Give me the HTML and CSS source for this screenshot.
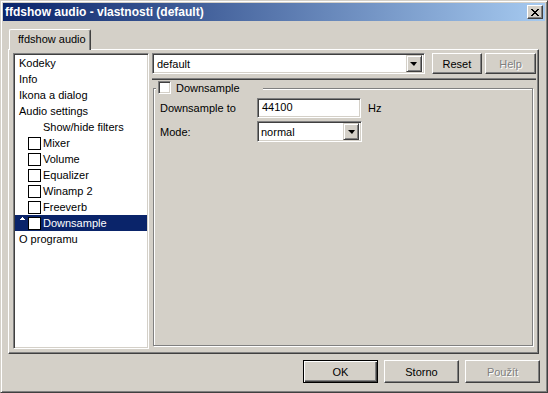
FILE: index.html
```html
<!doctype html>
<html lang="cs">
  <head>
    <meta charset="UTF-8" />
    <title>ffdshow audio - vlastnosti (default)</title>
    <link rel="stylesheet" href="styles.css">
  </head>
  <body>
    <div class="window">
      <div class="titlebar">
        <span class="title">ffdshow audio - vlastnosti (default)</span>
        <span class="close-btn">
          <svg width="8" height="7" viewBox="0 0 8 7" shape-rendering="crispEdges">
            <path d="M0 0h2v1h-2zM6 0h2v1h-2zM1 1h2v1h-2zM5 1h2v1h-2zM2 2h4v1h-4zM3 3h2v1h-2zM2 4h4v1h-4zM1 5h2v1h-2zM5 5h2v1h-2zM0 6h2v1h-2zM6 6h2v1h-2z" fill="#000"/>
          </svg>
        </span>
      </div>

      <div class="tabs">
        <div class="tab">ffdshow audio</div>
      </div>

      <div class="tab-panel">
        <ul class="tree">
          <li>Kodeky</li>
          <li>Info</li>
          <li>Ikona a dialog</li>
          <li>Audio settings</li>
          <li class="sub plain">Show/hide filters</li>
          <li class="sub"><span class="chk"></span>Mixer</li>
          <li class="sub"><span class="chk"></span>Volume</li>
          <li class="sub"><span class="chk"></span>Equalizer</li>
          <li class="sub"><span class="chk"></span>Winamp 2</li>
          <li class="sub"><span class="chk"></span>Freeverb</li>
          <li class="sub selected">
            <svg class="marker" width="5" height="3" viewBox="0 0 5 3" shape-rendering="crispEdges"><path d="M2 0h1v1h1v1h1v1h-5v-1h1v-1h1z" fill="#fff"/></svg>
            <span class="chk"></span>Downsample
          </li>
          <li>O programu</li>
        </ul>

        <div class="settings">
          <div class="toolbar">
            <div class="combo preset">
              <span class="combo-value">default</span>
              <span class="drop-btn"><span class="drop-arrow"></span></span>
            </div>
            <button class="btn small">Reset</button>
            <button class="btn small" disabled>Help</button>
          </div>

          <div class="separator"></div>

          <div class="group">
            <div class="group-title"><span class="check3d"></span>Downsample</div>
            <div class="field-row">
              <label>Downsample to</label>
              <div class="edit">44100</div>
              <span class="unit">Hz</span>
            </div>
            <div class="field-row">
              <label>Mode:</label>
              <div class="combo mode">
                <span class="combo-value">normal</span>
                <span class="drop-btn"><span class="drop-arrow"></span></span>
              </div>
            </div>
          </div>
        </div>
      </div>

      <div class="dialog-buttons">
        <button class="btn wide default">OK</button>
        <button class="btn wide">Storno</button>
        <button class="btn wide" disabled>Použít</button>
      </div>
    </div>
  </body>
</html>
```

FILE: styles.css
```css
body {
  margin: 0;
  font-family: 'Liberation Sans', Arial, sans-serif;
  font-size: 11px;
  color: #000;
  background-color: #d4d0c8;
}

.window {
  width: 548px;
  height: 393px;
  box-sizing: border-box;
  padding: 2px;
  background-color: #d4d0c8;
  border: 1px solid;
  border-color: #d4d0c8 #404040 #404040 #d4d0c8;
  box-shadow: inset 1px 1px #fff, inset -1px -1px #808080;
}

.titlebar {
  height: 18px;
  display: flex;
  align-items: center;
  justify-content: space-between;
  padding: 0 2px 0 2px;
  background: linear-gradient(to right, #0a246a, #a6caf0);
}

.title {
  color: #fff;
  font-weight: bold;
  font-size: 12px;
  line-height: 18px;
}

.close-btn {
  width: 16px;
  height: 14px;
  box-sizing: border-box;
  display: flex;
  align-items: center;
  justify-content: center;
  background-color: #d4d0c8;
  border: 1px solid;
  border-color: #fff #404040 #404040 #fff;
  box-shadow: inset -1px -1px #808080;
}

.close-btn svg {
  display: block;
}

.tabs {
  display: flex;
  margin: 8px 0 0 6px;
  position: relative;
  z-index: 1;
}

.tab {
  width: 82px;
  height: 21px;
  box-sizing: border-box;
  margin-bottom: -1px;
  padding-left: 8px;
  line-height: 19px;
  background-color: #d4d0c8;
  border: 1px solid;
  border-color: #fff #404040 #d4d0c8 #fff;
  border-bottom: none;
  border-radius: 2px 2px 0 0;
  box-shadow: inset -1px 0 #808080;
}

.tab-panel {
  width: 531px;
  height: 305px;
  box-sizing: border-box;
  margin-left: 5px;
  display: flex;
  gap: 3px;
  padding: 3px 1px 0 4px;
  border: 1px solid;
  border-color: #fff #404040 #404040 #fff;
  box-shadow: inset -1px -1px #808080;
}

/* tree list on the left */
.tree {
  width: 136px;
  height: 296px;
  box-sizing: border-box;
  margin: 0;
  padding: 0;
  list-style: none;
  background-color: #fff;
  border: 1px solid;
  border-color: #808080 #fff #fff #808080;
  box-shadow: inset 1px 1px #404040, inset -1px -1px #d4d0c8;
  padding: 1px;
}

.tree li {
  height: 16px;
  line-height: 16px;
  padding-left: 4px;
  display: flex;
  align-items: center;
  position: relative;
  white-space: nowrap;
}

.tree li.sub {
  padding-left: 13px;
}

.tree li.plain {
  padding-left: 28px;
}

.tree li.selected {
  background-color: #0a246a;
  color: #fff;
}

.marker {
  position: absolute;
  left: 5px;
  top: 2px;
}

.chk {
  width: 13px;
  height: 13px;
  box-sizing: border-box;
  margin-right: 2px;
  border: 1px solid #000;
  background-color: #fff;
}

/* right side */
.settings {
  width: 384px;
  display: flex;
  flex-direction: column;
}

.toolbar {
  display: flex;
  height: 21px;
}

.combo {
  height: 21px;
  box-sizing: border-box;
  display: flex;
  align-items: center;
  justify-content: space-between;
  background-color: #fff;
  border: 1px solid;
  border-color: #808080 #fff #fff #808080;
  box-shadow: inset 1px 1px #404040, inset -1px -1px #d4d0c8;
  padding: 2px 2px 2px 4px;
}

.preset {
  width: 274px;
  margin-right: 4px;
}

.mode {
  width: 105px;
  padding-left: 3px;
}

.drop-btn {
  width: 16px;
  height: 17px;
  box-sizing: border-box;
  display: flex;
  align-items: center;
  justify-content: center;
  background-color: #d4d0c8;
  border: 1px solid;
  border-color: #d4d0c8 #404040 #404040 #d4d0c8;
  box-shadow: inset 1px 1px #fff, inset -1px -1px #808080;
}

.drop-arrow {
  width: 0;
  height: 0;
  border-left: 4px solid transparent;
  border-right: 3px solid transparent;
  border-top: 4px solid #000;
  margin-top: 1px;
}

.btn {
  font-family: 'Liberation Sans', Arial, sans-serif;
  font-size: 11px;
  color: #000;
  background-color: #d4d0c8;
  box-sizing: border-box;
  padding: 0;
  border: 1px solid;
  border-color: #fff #404040 #404040 #fff;
  box-shadow: inset -1px -1px #808080;
}

.btn:disabled {
  color: #808080;
  text-shadow: 1px 1px #fff;
}

.btn.small {
  width: 51px;
  height: 21px;
  margin-left: 3px;
}

.separator {
  height: 2px;
  margin-top: 4px;
  background-color: #404040;
  border-top: 1px solid #808080;
  box-sizing: border-box;
}

.group {
  position: relative;
  width: 380px;
  height: 258px;
  box-sizing: border-box;
  margin: 8px 0 0 1px;
  padding: 9px 0 0 6px;
  border: 1px solid #808080;
  box-shadow: inset 1px 1px #fff, 1px 1px #fff;
  display: flex;
  flex-direction: column;
  gap: 3px;
}

.group-title {
  position: absolute;
  top: -8px;
  left: 2px;
  width: 105px;
  height: 13px;
  display: flex;
  align-items: center;
  padding-left: 2px;
  background-color: #d4d0c8;
}

.check3d {
  width: 13px;
  height: 13px;
  box-sizing: border-box;
  margin-right: 5px;
  background-color: #fff;
  border: 1px solid;
  border-color: #808080 #fff #fff #808080;
  box-shadow: inset 1px 1px #404040, inset -1px -1px #d4d0c8;
}

.field-row {
  display: flex;
  align-items: center;
}

.field-row label {
  width: 97px;
}

.edit {
  width: 104px;
  height: 20px;
  box-sizing: border-box;
  line-height: 16px;
  padding-left: 4px;
  background-color: #fff;
  border: 1px solid;
  border-color: #808080 #fff #fff #808080;
  box-shadow: inset 1px 1px #404040, inset -1px -1px #d4d0c8;
}

.unit {
  margin-left: 7px;
}

.dialog-buttons {
  display: flex;
  justify-content: flex-end;
  gap: 6px;
  margin-top: 6px;
  padding-right: 5px;
}

.btn.wide {
  width: 75px;
  height: 23px;
}

.btn.default {
  border: 1px solid #000;
  box-shadow: inset 1px 1px #fff, inset -1px -1px #404040, inset -2px -2px #808080;
}
```
